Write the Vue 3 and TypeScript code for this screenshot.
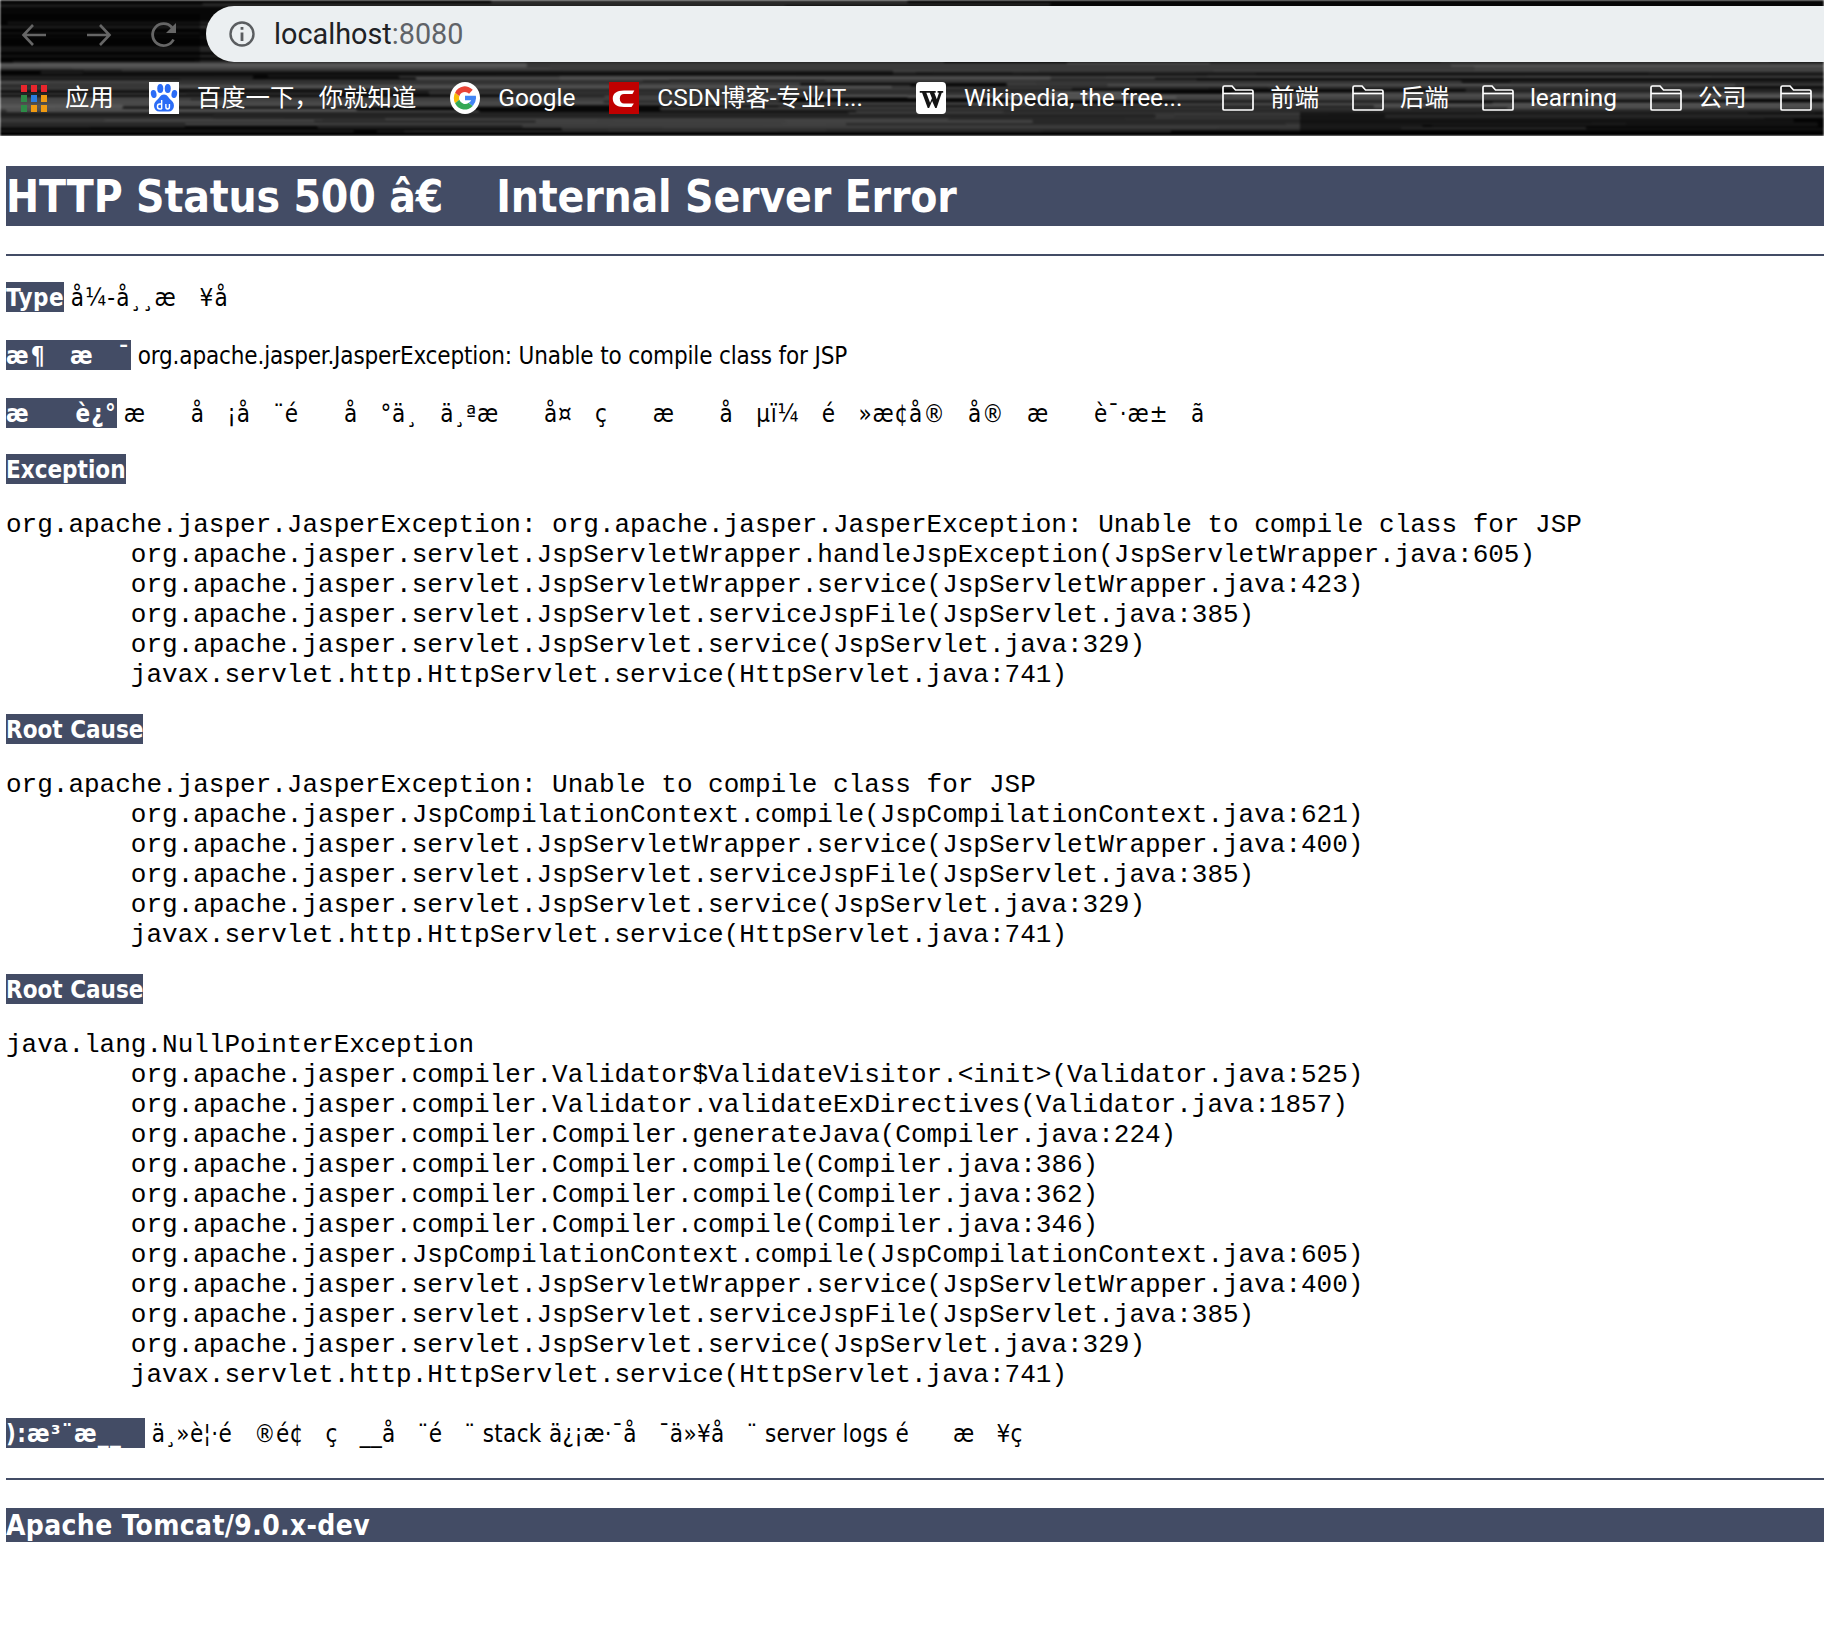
<script setup lang="ts">
interface Streak { x: number; y: number; w: number; h: number; c: string }
let seed = 7319;
const rnd = (): number => {
  seed = (seed * 16807) % 2147483647;
  return seed / 2147483647;
};
const streaks: Streak[] = [];
for (let i = 0; i < 190; i++) {
  const y = i < 30 ? rnd() * 62 : 62 + rnd() * 72;
  const top = y < 62;
  const g = Math.round(top ? 26 + rnd() * 34 : 30 + rnd() * 58);
  streaks.push({
    x: rnd() * 1824 - 300,
    y,
    w: 160 + rnd() * 800,
    h: 1 + rnd() * (top ? 2 : 4),
    c: `rgb(${g},${g},${g})`,
  });
}
const bookmarks = [
  { kind: 'baidu', label: '百度一下，你就知道', cls: 'first' },
  { kind: 'google', label: 'Google', cls: '' },
  { kind: 'csdn', label: 'CSDN博客-专业IT...', cls: 'trail-l' },
  { kind: 'wiki', label: 'Wikipedia, the free...', cls: 'trail-s' },
  { kind: 'folder', label: '前端', cls: 'folder' },
  { kind: 'folder', label: '后端', cls: 'folder' },
  { kind: 'folder', label: 'learning', cls: 'folder' },
  { kind: 'folder', label: '公司', cls: 'folder' },
  { kind: 'folder', label: '', cls: 'folder' },
];
const appColors = ['#e8262d', '#e8262d', '#e8262d', '#2e8b47', '#2a7de1', '#ef9a12', '#2e8b47', '#ef9a12', '#ef9a12'];

// Each undecodable C1 byte in the mis-decoded page shows as a 1em blank box.
const e = '\u2003';
const title = `HTTP Status 500 â€${e} Internal Server Error`;
const typeText = `å¼-å¸¸æ${e}¥å`;
const msgLabel = `æ¶${e}æ${e}¯`;
const descLabel = `æ${e}${e}è¿°`;
const desc = `æ${e}${e}å${e}¡å${e}¨é${e}${e}å${e}°ä¸${e}ä¸ªæ${e}${e}å¤${e}ç${e}${e}æ${e}${e}å${e}µï¼${e}é${e}»æ¢å®${e}å®${e}æ${e}${e}è¯·æ±${e}ã`;
const noteLabel = `):æ³¨æ__${e}`;
const note = `ä¸»è¦·é${e}®é¢${e}ç${e}__å${e}¨é${e}¨ stack ä¿¡æ·¯å${e}¯ä»¥å${e}¨ server logs é${e}${e}æ${e}¥ç`;

const trace1 = `org.apache.jasper.JasperException: org.apache.jasper.JasperException: Unable to compile class for JSP
	org.apache.jasper.servlet.JspServletWrapper.handleJspException(JspServletWrapper.java:605)
	org.apache.jasper.servlet.JspServletWrapper.service(JspServletWrapper.java:423)
	org.apache.jasper.servlet.JspServlet.serviceJspFile(JspServlet.java:385)
	org.apache.jasper.servlet.JspServlet.service(JspServlet.java:329)
	javax.servlet.http.HttpServlet.service(HttpServlet.java:741)`;
const trace2 = `org.apache.jasper.JasperException: Unable to compile class for JSP
	org.apache.jasper.JspCompilationContext.compile(JspCompilationContext.java:621)
	org.apache.jasper.servlet.JspServletWrapper.service(JspServletWrapper.java:400)
	org.apache.jasper.servlet.JspServlet.serviceJspFile(JspServlet.java:385)
	org.apache.jasper.servlet.JspServlet.service(JspServlet.java:329)
	javax.servlet.http.HttpServlet.service(HttpServlet.java:741)`;
const trace3 = `java.lang.NullPointerException
	org.apache.jasper.compiler.Validator$ValidateVisitor.<init>(Validator.java:525)
	org.apache.jasper.compiler.Validator.validateExDirectives(Validator.java:1857)
	org.apache.jasper.compiler.Compiler.generateJava(Compiler.java:224)
	org.apache.jasper.compiler.Compiler.compile(Compiler.java:386)
	org.apache.jasper.compiler.Compiler.compile(Compiler.java:362)
	org.apache.jasper.compiler.Compiler.compile(Compiler.java:346)
	org.apache.jasper.JspCompilationContext.compile(JspCompilationContext.java:605)
	org.apache.jasper.servlet.JspServletWrapper.service(JspServletWrapper.java:400)
	org.apache.jasper.servlet.JspServlet.serviceJspFile(JspServlet.java:385)
	org.apache.jasper.servlet.JspServlet.service(JspServlet.java:329)
	javax.servlet.http.HttpServlet.service(HttpServlet.java:741)`;
</script>

<template>
  <div class="page">
    <header class="chrome">
      <svg class="streaks" width="1824" height="136" aria-hidden="true">
        <rect width="1824" height="136" fill="#070707" />
        <rect x="0" y="63" width="1824" height="7" fill="#3a3a3a" />
        <rect x="0" y="112" width="1300" height="14" fill="#2a2a2a" />
        <rect v-for="(s, i) in streaks" :key="i" :x="s.x" :y="s.y" :width="s.w" :height="s.h" :rx="s.h / 2" :fill="s.c" />
        <rect x="0" y="72" width="1824" height="4" fill="#000" opacity=".6" />
        <rect x="0" y="14" width="200" height="48" fill="#000" opacity=".45" />
        <rect x="0" y="132" width="1824" height="4" fill="#000" />
        <rect x="1300" y="112" width="524" height="24" fill="#000" opacity=".55" />
      </svg>
      <div class="top-row">
        <div class="nav">
          <svg width="30" height="30" viewBox="0 0 30 30" fill="none" stroke="#666" stroke-width="2.6">
            <path d="M27 15H5M14 5 4.500 15 14 25" />
          </svg>
          <svg width="30" height="30" viewBox="0 0 30 30" fill="none" stroke="#666" stroke-width="2.6">
            <path d="M3 15H25M16 5 25.500 15 16 25" />
          </svg>
          <svg width="30" height="30" viewBox="0 0 30 30" fill="none" stroke="#666" stroke-width="2.800">
            <path d="M24.500 19.500A11 11 0 1 1 23 7.500" />
            <path d="M27 3V13H17Z" fill="#666" stroke="none" />
          </svg>
        </div>
        <div class="omnibox">
          <svg width="28" height="28" viewBox="0 0 28 28" fill="none" stroke="#5a5d60" stroke-width="2.400">
            <circle cx="14" cy="14" r="11.500" />
            <path d="M14 12.500V21M14 7V9.800" stroke-width="2.800" />
          </svg>
          <span class="url"><span class="host">localhost</span>:8080</span>
        </div>
      </div>
      <nav class="bookmarks">
        <div class="bm">
          <span class="apps"><i v-for="(c, i) in appColors" :key="i" :style="{ background: c }"></i></span>
          <span class="bm-label">应用</span>
        </div>
        <div v-for="b in bookmarks" :key="b.kind + b.label" class="bm" :class="b.cls">
          <svg v-if="b.kind === 'baidu'" width="30" height="32" viewBox="0 0 32 32" preserveAspectRatio="none">
            <rect width="32" height="32" fill="#fff" />
            <g fill="#2b6cf6">
              <ellipse cx="5" cy="12" rx="3" ry="4" transform="rotate(-12 5 12)" />
              <ellipse cx="12" cy="6.500" rx="3.200" ry="4.500" />
              <ellipse cx="20" cy="6.500" rx="3.200" ry="4.500" />
              <ellipse cx="27" cy="12" rx="3" ry="4" transform="rotate(12 27 12)" />
              <path d="M16 12.500c-4 0-4.500 3.500-8 6-4.500 3.200-3 11 3 11h10c6 0 7.500-7.800 3-11-3.500-2.500-4-6-8-6Z" />
            </g>
            <path d="M13.500 18v9M13.500 22h-2a2.400 2.400 0 0 0 0 5h2M18 22v3a1.900 1.900 0 0 0 3.800 0v-3" fill="none" stroke="#fff" stroke-width="1.500" />
          </svg>
          <svg v-else-if="b.kind === 'google'" width="30" height="32" viewBox="0 0 32 32" preserveAspectRatio="none">
            <circle cx="16" cy="16" r="16" fill="#fff" />
            <g transform="translate(16 16) scale(1.180) translate(-16 -16)">
              <path d="M16 11a5.500 5.500 0 0 1 3.700 1.400l3.300-3.300A10 10 0 0 0 7 11.500l3.800 3A5.700 5.700 0 0 1 16 11Z" fill="#ea4335" />
              <path d="M10.800 14.500 7 11.500a10 10 0 0 0 0 9l3.800-3a5.700 5.700 0 0 1 0-3Z" fill="#fbbc05" />
              <path d="M10.800 17.500 7 20.500A10 10 0 0 0 23 22.800l-3.600-2.800A5.800 5.800 0 0 1 10.800 17.500Z" fill="#34a853" />
              <path d="M26 16c0-.7-.1-1.400-.2-2H16v4h5.600a4.800 4.800 0 0 1-2.200 2l3.600 2.800A10 10 0 0 0 26 16Z" fill="#4285f4" />
            </g>
          </svg>
          <svg v-else-if="b.kind === 'csdn'" width="30" height="32" viewBox="0 0 32 32" preserveAspectRatio="none">
            <rect width="32" height="32" fill="#c00000" />
            <path d="M27 8.500H16C8 8.500 4 11.500 4 16.500S8 25 16 25h8l2.500-3.500H16c-2.500 0-4.500-1.800-4.500-5s2-4.500 4.500-4.500H25Z" fill="#fff" />
          </svg>
          <svg v-else-if="b.kind === 'wiki'" width="30" height="32" viewBox="0 0 32 32" preserveAspectRatio="none">
            <rect width="32" height="32" rx="4" fill="#fff" />
            <path d="M4 9h9v1.800h-2l4 10 2-4.500-2.300-5.500H13V9h8v1.800h-1.500l2.700 6.500 2.300-6.500H23V9h6v1.800h-1.500L22 26h-1.500l-3.300-7L14 26h-1.500L6.500 10.800H4Z" fill="#141414" />
          </svg>
          <svg v-else width="32" height="26" viewBox="0 0 32 26" fill="none" stroke="#fff" stroke-width="1.700">
            <path d="M1 24V2.500C1 1.500 1.500 1 2.500 1H10L13.500 5H29.500C30.500 5 31 5.500 31 6.500V24C31 24.600 30.500 25 29.500 25H2.500C1.500 25 1 24.600 1 24Z" />
            <path d="M1 8.500H31" />
          </svg>
          <span v-if="b.label" class="bm-label">{{ b.label }}</span>
        </div>
      </nav>
    </header>

    <main class="doc">
      <h1>{{ title }}</h1>
      <hr />
      <p><b class="l-type">Type</b> <span class="t-type">{{ typeText }}</span></p>
      <p><b class="l-msg">{{ msgLabel }}</b> org.apache.jasper.JasperException: Unable to compile class for JSP</p>
      <p><b class="l-desc">{{ descLabel }}</b> <span class="t-desc">{{ desc }}</span></p>
      <p class="label"><b>Exception</b></p>
      <pre>{{ trace1 }}</pre>
      <p class="label"><b>Root Cause</b></p>
      <pre>{{ trace2 }}</pre>
      <p class="label"><b>Root Cause</b></p>
      <pre>{{ trace3 }}</pre>
      <p class="note"><b class="l-note">{{ noteLabel }}</b> <span class="t-note">{{ note }}</span></p>
      <hr class="end" />
      <h3>Apache Tomcat/9.0.x-dev</h3>
    </main>
  </div>
</template>

<style scoped>
.page { width: 1824px; height: 1644px; overflow: hidden; background: #fff; }
.chrome { position: relative; height: 136px; overflow: hidden; font-family: Roboto, "Noto Sans CJK SC", sans-serif; }
.streaks { position: absolute; left: 0; top: 0; filter: blur(.8px); }
.top-row { position: relative; display: flex; align-items: flex-start; padding-top: 6px; height: 68px; box-sizing: border-box; }
.nav { display: flex; gap: 35px; width: 206px; padding: 14px 0 0 19px; box-sizing: border-box; }
.omnibox { flex: 1; height: 56px; margin-right: -30px; background: #ebeff1; border-radius: 28px; display: flex; align-items: center; gap: 18px; padding-left: 22px; }
.url { font-size: 28.800px; color: #5f6368; }
.host { color: #202124; }
.bookmarks { position: relative; display: flex; align-items: center; gap: 34px; height: 32px; margin-top: 14px; padding-left: 21px; white-space: nowrap; }
.bm { display: flex; align-items: center; gap: 18px; }
.bm.first { margin-left: 1px; }
.bm.trail-l { margin-right: 19px; }
.bm.trail-s { margin-right: 6px; }
.bm.folder { gap: 16px; margin-right: -1px; }
.bm-label { color: #fff; font-size: 24.400px; line-height: 32px; }
.apps { display: grid; grid-template-columns: repeat(3, 6px); grid-auto-rows: 7px; gap: 3px 4px; width: 26px; }
.apps i { display: block; }
.doc { padding: 30px 0 0 6px; font-family: "DejaVu Sans Condensed", "DejaVu Sans", sans-serif; color: #000; width: 1880px; }
h1, h3, b { background: #434c65; color: #fff; font-weight: 700; }
b { padding-top: 2px; letter-spacing: 0; }
.l-type { letter-spacing: .5px; }
.l-msg { letter-spacing: 2px; }
.l-desc { letter-spacing: 1.200px; }
.l-note { letter-spacing: 1.300px; }
.t-type { letter-spacing: 1.150px; }
.t-desc { letter-spacing: .85px; }
.t-note { letter-spacing: .35px; }
h1 { margin: 0; height: 60px; line-height: 62px; font-size: 44px; white-space: pre; letter-spacing: -.17px; }
h3 { margin: 0; height: 34px; line-height: 36px; font-size: 28px; letter-spacing: .35px; }
hr { height: 2px; background: #434c65; border: 0; margin: 28px 0 0; }
p { margin: 0; height: 30px; margin-top: 28px; font-size: 24px; line-height: 30px; white-space: pre; letter-spacing: -.15px; position: relative; top: -1px; }
pre { margin: 25px 0 0; font-family: "Liberation Mono", monospace; font-size: 26px; line-height: 30px; tab-size: 8; }
.label { margin-top: 25px; top: 0; }
.note { margin-top: 30px; }
hr.end { margin-top: 28px; }
.end + h3 { margin-top: 28px; }
</style>

<style>
html, body { margin: 0; background: #fff; }
</style>
